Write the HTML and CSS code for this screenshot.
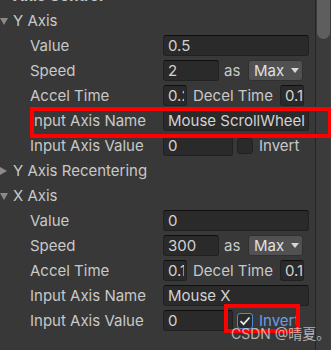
FILE: index.html
```html
<!DOCTYPE html>
<html lang="en">
<head>
  <meta charset="UTF-8" />
  <title>Axis Control</title>
  <link rel="stylesheet" href="styles.css">
</head>
<body>
  <div class="inspector">
    <div class="pane">
      <div class="row fold title">Axis Control</div>

      <!-- Y Axis -->
      <div class="row fold"><span class="arrow down"></span>Y Axis</div>
      <div class="row prop"><span class="label">Value</span><span class="field">0.5</span></div>
      <div class="row prop">
        <span class="label">Speed</span>
        <span class="field speed">2</span>
        <span class="as">as</span>
        <span class="dropdown">Max<span class="caret"></span></span>
      </div>
      <div class="row prop">
        <span class="label">Accel Time</span>
        <span class="field tiny"><span class="clip">0.2</span></span>
        <span class="sublabel">Decel Time</span>
        <span class="field tiny">0.1</span>
      </div>
      <div class="row prop"><span class="label">Input Axis Name</span><span class="field">Mouse ScrollWheel</span></div>
      <div class="row prop">
        <span class="label">Input Axis Value</span>
        <span class="field value">0</span>
        <span class="check"></span>
        <span class="invert">Invert</span>
      </div>
      <div class="row fold"><span class="arrow right"></span>Y Axis Recentering</div>

      <!-- X Axis -->
      <div class="row fold"><span class="arrow down"></span>X Axis</div>
      <div class="row prop"><span class="label">Value</span><span class="field">0</span></div>
      <div class="row prop">
        <span class="label">Speed</span>
        <span class="field speed">300</span>
        <span class="as">as</span>
        <span class="dropdown">Max<span class="caret"></span></span>
      </div>
      <div class="row prop">
        <span class="label">Accel Time</span>
        <span class="field tiny"><span class="clip">0.1</span></span>
        <span class="sublabel">Decel Time</span>
        <span class="field tiny">0.1</span>
      </div>
      <div class="row prop"><span class="label">Input Axis Name</span><span class="field">Mouse X</span></div>
      <div class="row prop">
        <span class="label">Input Axis Value</span>
        <span class="field value">0</span>
        <span class="check on">
          <svg width="12" height="10" viewBox="0 0 12 10"><path d="M1.5 5.2 L4.6 8.2 L10.5 1.5" fill="none" stroke="#e8e8e8" stroke-width="1.8"/></svg>
        </span>
        <span class="invert on">Invert</span>
      </div>
    </div>
    <div class="scrollbar"><div class="thumb"></div></div>

    <div class="mark mark-name"></div>
    <div class="mark mark-invert"></div>
    <div class="watermark">CSDN @晴夏。</div>
  </div>
</body>
</html>
```

FILE: styles.css
```css
* {
  margin: 0;
  padding: 0;
  box-sizing: border-box;
}
body {
  background: #383838;
  font-family: Inter, "Noto Sans", "Noto Sans CJK SC", sans-serif;
  font-size: 15px;
  color: #c8c8c8;
  overflow: hidden;
}
.inspector {
  position: relative;
  display: flex;
  width: 331px;
  height: 350px;
  overflow: hidden;
}
.pane {
  width: 315px;
  margin-top: -17px;
}
.row {
  height: 25px;
  display: flex;
  align-items: center;
  white-space: nowrap;
}
.title {
  padding-left: 13px;
  font-weight: 700;
}
.arrow {
  width: 13px;
  height: 10px;
  position: relative;
}
.arrow.down::before {
  content: "";
  position: absolute;
  left: 0;
  top: 2px;
  border-left: 4px solid transparent;
  border-right: 4px solid transparent;
  border-top: 7px solid #8a8a8a;
}
.arrow.right::before {
  content: "";
  position: absolute;
  left: 0;
  top: 1px;
  border-top: 4px solid transparent;
  border-bottom: 4px solid transparent;
  border-left: 7px solid #8a8a8a;
}
.prop {
  padding-left: 30px;
  padding-right: 6px;
}
.label {
  width: 133px;
  flex-shrink: 0;
  overflow: hidden;
}
.field {
  flex: 1;
  height: 21px;
  line-height: 19px;
  padding: 0 4px;
  background: #2a2a2a;
  border: 1px solid #212121;
  border-top-color: #0f0f0f;
  border-radius: 3px;
  color: #d2d2d2;
  overflow: hidden;
}
.field.speed {
  flex: none;
  width: 56px;
}
.field.value {
  flex: none;
  width: 70px;
}
.field.tiny {
  flex: none;
  width: 24px;
  padding: 0 0 0 4px;
}
.clip {
  display: block;
  width: 16px;
  overflow: hidden;
}
.as {
  margin-left: 5px;
  width: 24px;
}
.dropdown {
  width: 55px;
  height: 21px;
  line-height: 19px;
  padding: 0 5px;
  background: #515151;
  border: 1px solid #303030;
  border-radius: 3px;
  color: #e0e0e0;
  display: flex;
  align-items: center;
}
.caret {
  margin-left: 7px;
  border-left: 4px solid transparent;
  border-right: 4px solid transparent;
  border-top: 5px solid #d8d8d8;
}
.sublabel {
  width: 93px;
  padding-left: 6px;
}
.check {
  width: 16px;
  height: 16px;
  margin-left: 4px;
  background: #2a2a2a;
  border: 1px solid #212121;
  border-radius: 3px;
  display: flex;
  align-items: center;
  justify-content: center;
}
.check.on {
  border-color: #4f86d6;
}
.invert {
  margin-left: 6px;
}
.invert.on {
  color: #6a9ee6;
}
.scrollbar {
  width: 16px;
  border-left: 1px solid #252525;
  background: #3b3b3b;
  padding: 0 1px;
}
.thumb {
  height: 39px;
  background: #5e5e5e;
  border-radius: 0 0 7px 7px;
}
.mark {
  position: absolute;
  border: 4px solid #ff0000;
}
.mark-name {
  left: 30px;
  top: 107px;
  width: 302px;
  height: 31px;
}
.mark-invert {
  left: 224px;
  top: 304px;
  width: 76px;
  height: 29px;
}
.watermark {
  position: absolute;
  left: 231px;
  top: 323px;
  font-size: 14px;
  white-space: nowrap;
  color: rgba(220, 220, 220, 0.75);
}
```
